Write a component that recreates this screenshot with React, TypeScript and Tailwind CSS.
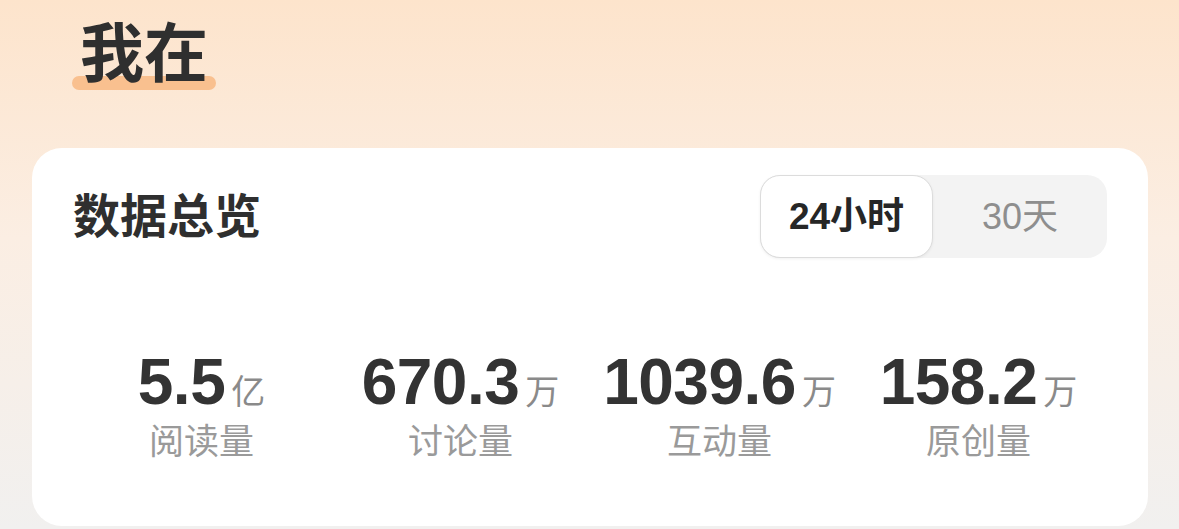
import React from 'react';

const stats = [
  { value: '5.5', unit: '亿', label: '阅读量' },
  { value: '670.3', unit: '万', label: '讨论量' },
  { value: '1039.6', unit: '万', label: '互动量' },
  { value: '158.2', unit: '万', label: '原创量' },
];

const font = "font-['Liberation_Sans','Noto_Sans_CJK_SC',sans-serif]";

const App = () => {
  return (
    <div className={`w-[1179px] h-[529px] overflow-hidden bg-[linear-gradient(180deg,#fde4cc_0%,#fbeee3_45%,#f1f0ef_100%)] ${font}`}>
      {/* page title */}
      <div className="pl-[80px] pt-[22px] h-[148px]">
        <div className="relative inline-block">
          <span className="absolute left-[-8px] right-[-8px] top-[54px] h-[14px] rounded-full bg-[#f9c08f]" />
          <h1 className="relative text-[64px] leading-[64px] font-bold text-[#2f2f2f]">我在</h1>
        </div>
      </div>

      {/* overview card */}
      <div className="mx-[32px] w-[1116px] h-[378px] rounded-[30px] bg-white">
        <div className="flex items-center justify-between pl-[41px] pr-[41px] pt-[27px]">
          <h2 className="text-[47px] leading-[56px] font-bold text-[#2f2f2f]">数据总览</h2>
          <div className="flex w-[347px] h-[83px] rounded-[20px] bg-[#f3f3f3]">
            <button className="w-[173px] h-full rounded-[20px] bg-white border border-[#dcdcdc] shadow-[0_1px_3px_rgba(0,0,0,0.06)] text-[37px] font-semibold text-[#262626]">
              24小时
            </button>
            <button className="flex-1 h-full text-[36px] text-[#8e8e8e]">30天</button>
          </div>
        </div>

        <div className="grid grid-cols-4 px-[40px] mt-[92px]">
          {stats.map((s) => (
            <div key={s.label} className="flex flex-col items-center">
              <div className="flex items-baseline">
                <span className="text-[64px] leading-[64px] font-bold text-[#333333] tracking-[-0.5px]">{s.value}</span>
                <span className="ml-[6px] text-[34px] text-[#8a8a8a]">{s.unit}</span>
              </div>
              <div className="mt-[4px] text-[35px] leading-[40px] text-[#9a9a9a]">{s.label}</div>
            </div>
          ))}
        </div>
      </div>
    </div>
  );
};

export default App;
